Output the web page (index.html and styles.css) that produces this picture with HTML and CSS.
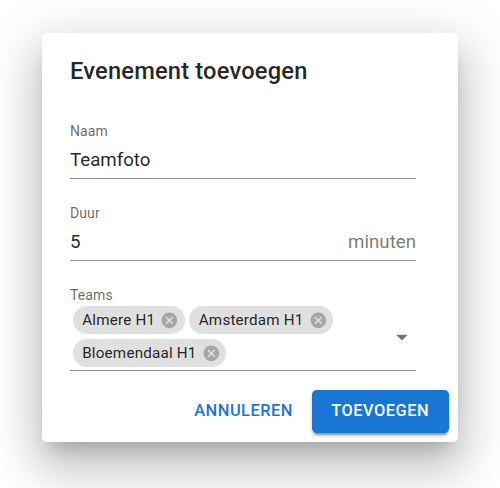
FILE: index.html
```html
<!DOCTYPE html>
<html lang="nl">
<head>
<meta charset="utf-8">
<title>Evenement toevoegen</title>
<link rel="stylesheet" href="styles.css">
</head>
<body>
<div class="dialog">
  <h2 class="title">Evenement toevoegen</h2>
  <div class="content">
    <div class="field">
      <div class="label">Naam</div>
      <div class="input-row"><span class="value">Teamfoto</span></div>
    </div>
    <div class="field">
      <div class="label">Duur</div>
      <div class="input-row"><span class="value">5</span><span class="adornment">minuten</span></div>
    </div>
    <div class="field">
      <div class="label">Teams</div>
      <div class="select-row">
        <div class="chips">
          <span class="chip"><span class="chip-label">Almere H1</span><svg class="chip-del" viewBox="0 0 24 24"><path d="M12 2C6.47 2 2 6.470 2 12s4.47 10 10 10 10-4.47 10-10S17.53 2 12 2zm5 13.59L15.59 17 12 13.41 8.41 17 7 15.59 10.59 12 7 8.41 8.41 7 12 10.59 15.59 7 17 8.41 13.41 12 17 15.59z"/></svg></span>
          <span class="chip"><span class="chip-label">Amsterdam H1</span><svg class="chip-del" viewBox="0 0 24 24"><path d="M12 2C6.47 2 2 6.47 2 12s4.47 10 10 10 10-4.47 10-10S17.53 2 12 2zm5 13.59L15.59 17 12 13.41 8.41 17 7 15.59 10.59 12 7 8.41 8.41 7 12 10.59 15.59 7 17 8.41 13.41 12 17 15.59z"/></svg></span>
          <span class="chip"><span class="chip-label">Bloemendaal H1</span><svg class="chip-del" viewBox="0 0 24 24"><path d="M12 2C6.47 2 2 6.47 2 12s4.47 10 10 10 10-4.47 10-10S17.53 2 12 2zm5 13.59L15.59 17 12 13.41 8.41 17 7 15.59 10.59 12 7 8.41 8.41 7 12 10.59 15.59 7 17 8.41 13.41 12 17 15.59z"/></svg></span>
        </div>
        <svg class="arrow" viewBox="0 0 24 24"><path d="M7 10l5 5 5-5z"/></svg>
      </div>
    </div>
  </div>
  <div class="actions">
    <button class="btn btn-text">Annuleren</button>
    <button class="btn btn-contained">Toevoegen</button>
  </div>
</div>
</body>
</html>
```
FILE: styles.css
```css
* { box-sizing: border-box; }
html, body { margin: 0; padding: 0; background: #fff; }
body {
  font-family: Roboto, "Liberation Sans", Arial, sans-serif;
  color: rgba(0,0,0,0.87);
  width: 500px;
  height: 488px;
  overflow: hidden;
}
.dialog {
  width: 416px;
  height: 409px;
  margin: 33px 0 0 42px;
  background: #fff;
  border-radius: 4.7px;
  box-shadow: 0 13px 17.5px -8px rgba(0,0,0,0.2), 0 28px 44px 3.5px rgba(0,0,0,0.14), 0 10.5px 54px 9.4px rgba(0,0,0,0.12);
  display: flex;
  flex-direction: column;
}
.title {
  margin: 0;
  padding: 22px 28px 0;
  font-size: 23.7px;
  font-weight: 500;
  line-height: 32px;
  letter-spacing: 0.18px;
}
.content {
  padding: 36px 28px 0;
  display: flex;
  flex-direction: column;
  gap: 26px;
}
.field { width: 346px; }
.label {
  font-size: 14px;
  line-height: 16px;
  color: rgba(0,0,0,0.6);
  letter-spacing: 0.1px;
}
.input-row {
  margin-top: 10px;
  display: flex;
  justify-content: space-between;
  font-size: 18.7px;
  line-height: 23px;
  padding-bottom: 6px;
  border-bottom: 1px solid rgba(0,0,0,0.42);
}
.adornment { color: rgba(0,0,0,0.54); }
.select-row {
  margin-top: 3px;
  display: flex;
  align-items: center;
  padding: 0 0 3px 2.7px;
  border-bottom: 1px solid rgba(0,0,0,0.42);
}
.chips {
  flex: 1;
  display: flex;
  flex-wrap: wrap;
  gap: 5px 4.7px;
}
.chip {
  display: inline-flex;
  align-items: center;
  height: 28px;
  border-radius: 14px;
  background: #e0e0e0;
  font-size: 15.2px;
  letter-spacing: 0.2px;
  color: rgba(0,0,0,0.87);
}
.chip-label { padding: 0 9.4px 0 9.5px; white-space: nowrap; }
.chip-del {
  width: 18.7px;
  height: 18.7px;
  margin: 0 5.5px 0 -4.2px;
  fill: rgba(0,0,0,0.26);
}
.arrow {
  width: 28px;
  height: 28px;
  fill: rgba(0,0,0,0.54);
  flex: none;
}
.actions {
  margin-top: auto;
  display: flex;
  justify-content: flex-end;
  gap: 9.4px;
  padding: 9.4px;
}
.btn {
  font-family: Roboto, "Liberation Sans", Arial, sans-serif;
  font-size: 16.4px;
  font-weight: 500;
  letter-spacing: 0.5px;
  text-transform: uppercase;
  line-height: 28.7px;
  border: 0;
  border-radius: 4.7px;
  cursor: pointer;
}
.btn-text {
  background: transparent;
  color: #1976d2;
  padding: 7px 9.4px;
}
.btn-contained {
  background: #1976d2;
  color: #fff;
  padding: 7px 19.5px;
  box-shadow: 0 3.5px 1px -2.3px rgba(0,0,0,0.2), 0 2.3px 2.3px 0 rgba(0,0,0,0.14), 0 1.2px 5.8px 0 rgba(0,0,0,0.12);
}
```
